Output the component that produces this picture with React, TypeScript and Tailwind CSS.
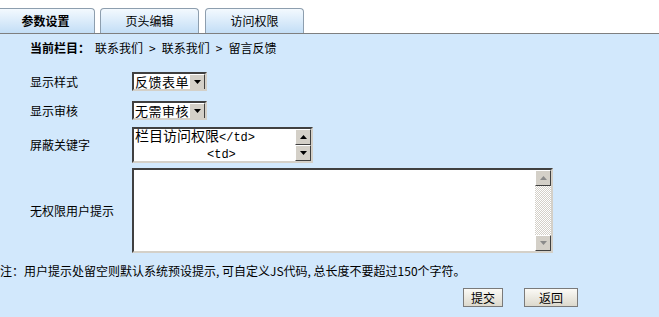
import React from 'react';

const font = { fontFamily: '"Noto Sans CJK SC", "Liberation Sans", sans-serif' };

// 经典 Windows 风格的小箭头按钮
const ArrowBtn = ({ dir, disabled = false }: { dir: 'up' | 'down'; disabled?: boolean }) => (
  <div className="flex h-[16px] w-[16px] shrink-0 items-center justify-center border border-t-white border-l-white border-r-[#404040] border-b-[#404040] bg-[#d4d0c8]">
    <svg width="7" height="4" viewBox="0 0 7 4">
      {dir === 'up' ? (
        <path d="M3.5 0 L7 4 L0 4 Z" fill={disabled ? '#8a8a8a' : '#000'} />
      ) : (
        <path d="M0 0 L7 0 L3.5 4 Z" fill={disabled ? '#8a8a8a' : '#000'} />
      )}
    </svg>
  </div>
);

const Select = ({ value }: { value: string }) => (
  <div className="flex h-[19px] w-[75px] items-center overflow-hidden border-2 border-t-[#404040] border-l-[#404040] border-r-[#d4d0c8] border-b-[#d4d0c8] bg-white">
    <span className="flex-1 whitespace-nowrap pl-[1px] text-[13px] leading-none tracking-[0.5px] text-black">{value}</span>
    <ArrowBtn dir="down" />
  </div>
);

const Tab = ({ label, active, className }: { label: string; active?: boolean; className: string }) => (
  <div
    className={`flex h-[25px] items-center justify-center rounded-t-[4px] border border-b-0 border-[#8d9eae] bg-gradient-to-b from-[#f3f9fe] to-[#c3def6] text-[12px] text-black ${className} ${active ? 'font-bold' : ''}`}
  >
    {label}
  </div>
);

const Sep = () => <span className="mx-[6px]">&gt;</span>;

export default function App() {
  return (
    <div className="h-[317px] w-[659px] overflow-hidden bg-white" style={font}>
      {/* 标签页 */}
      <div className="flex h-[33px] items-end">
        <Tab label="参数设置" active className="ml-[-4px] w-[99px]" />
        <Tab label="页头编辑" className="ml-[5px] w-[99px]" />
        <Tab label="访问权限" className="ml-[6px] w-[99px]" />
      </div>
      <div className="h-[284px] border-t border-[#7f7f7f] bg-[#d2e8fc] text-[12px] text-black">
        <div className="flex pl-[30px] pt-[7px] leading-[14px]">
          <b className="mr-[5px]">当前栏目：</b>联系我们<Sep />联系我们<Sep />留言反馈
        </div>

        <div className="mt-[17px] flex items-center pl-[30px]">
          <span className="w-[102px]">显示样式</span>
          <Select value="反馈表单" />
        </div>
        <div className="mt-[10px] flex items-center pl-[30px]">
          <span className="w-[102px]">显示审核</span>
          <Select value="无需审核" />
        </div>

        <div className="mt-[7px] flex items-center pl-[30px]">
          <span className="w-[102px]">屏蔽关键字</span>
          <div className="flex h-[36px] w-[181px] border-2 border-t-[#404040] border-l-[#404040] border-r-[#d4d0c8] border-b-[#d4d0c8] bg-white">
            <div
              className="flex-1 whitespace-pre pl-[1px] text-[14px] leading-[16px]"
              style={{ fontFamily: '"Liberation Mono", "Noto Sans CJK SC", monospace' }}
            >
              {'栏目访问权限'}
              <span className="text-[12px]">{'</td>'}</span>
              {'\n'}
              <span className="text-[12px]">{'          <td>'}</span>
            </div>
            <div className="flex flex-col">
              <ArrowBtn dir="up" />
              <ArrowBtn dir="down" />
            </div>
          </div>
        </div>

        <div className="mt-[5px] flex items-center pl-[30px]">
          <span className="w-[102px]">无权限用户提示</span>
          <div className="flex h-[85px] w-[421px] border-2 border-t-[#404040] border-l-[#404040] border-r-[#d4d0c8] border-b-[#d4d0c8] bg-white">
            <div className="flex-1" />
            <div className="flex w-[16px] flex-col bg-[repeating-conic-gradient(#ffffff_0%_25%,#d4d0c8_0%_50%)] bg-[length:2px_2px]">
              <ArrowBtn dir="up" disabled />
              <div className="flex-1" />
              <ArrowBtn dir="down" disabled />
            </div>
          </div>
        </div>

        <div className="mt-[11px] leading-[14px]">
          注：用户提示处留空则默认系统预设提示, 可自定义JS代码, 总长度不要超过150个字符。
        </div>

        <div className="mt-[10px] flex pl-[463px]">
          <button className="h-[19px] w-[40px] border border-[#7a7a7a] bg-gradient-to-b from-[#fbfaf6] to-[#dcd9cd] text-[12px] leading-none">
            提交
          </button>
          <button className="ml-[21px] h-[19px] w-[54px] border border-[#7a7a7a] bg-gradient-to-b from-[#fbfaf6] to-[#dcd9cd] text-[12px] leading-none">
            返回
          </button>
        </div>
      </div>
    </div>
  );
}
